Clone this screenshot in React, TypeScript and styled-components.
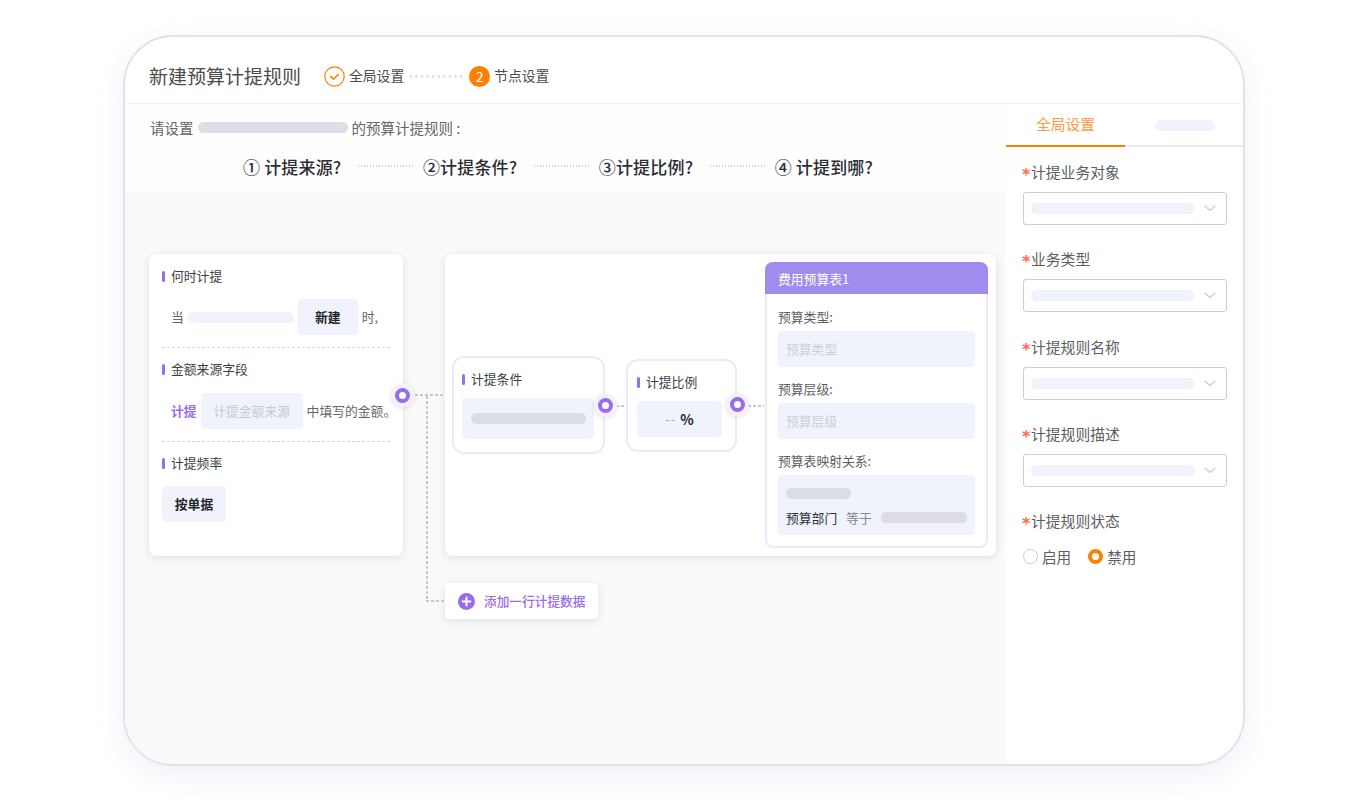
import React from 'react';
import styled, { createGlobalStyle, css } from 'styled-components';

const ORANGE = '#ff8000';
const PURPLE = '#9a6bec';
const FILL = '#f0f3fb';

const GlobalStyle = createGlobalStyle`
  html, body {
    margin: 0;
    background: #fff;
    font-family: "Noto Sans CJK SC", "Noto Sans", sans-serif;
  }
  body {
    min-height: 800px;
  }
`;

const dotsX = (color: string, pitch: number, dot: number, size: number) => css`
  background-image: linear-gradient(to right, ${color} 0 ${dot}px, transparent ${dot}px);
  background-size: ${pitch}px ${size}px;
  background-repeat: repeat-x;
`;

const CheckIcon = () => (
  <svg width="21" height="21" viewBox="0 0 21 21" fill="none">
    <circle cx="10.5" cy="10.5" r="9.7" stroke={ORANGE} strokeWidth="1.2" />
    <path d="M6.8 10.6l2.7 2.5 4.8-4.6" stroke={ORANGE} strokeWidth="1.6" strokeLinecap="round" strokeLinejoin="round" />
  </svg>
);

const Chevron = () => (
  <svg width="12" height="7" viewBox="0 0 12 7" fill="none">
    <path d="M1 1l5 4.5L11 1" stroke="#c8cbd5" strokeWidth="1.1" strokeLinecap="round" strokeLinejoin="round" />
  </svg>
);

const PlusIcon = () => (
  <svg width="17" height="17" viewBox="0 0 17 17">
    <circle cx="8.5" cy="8.5" r="8.5" fill={PURPLE} />
    <path d="M4.6 8.5h7.8M8.5 4.6v7.8" stroke="#fff" strokeWidth="2" strokeLinecap="round" />
  </svg>
);

const FIELDS = ['计提业务对象', '业务类型', '计提规则名称', '计提规则描述'];
const QUESTIONS = ['① 计提来源?', '②计提条件?', '③计提比例?', '④ 计提到哪?'];

export default function App() {
  return (
    <>
      <GlobalStyle />
      <Frame>
        <Header>
          <Title>新建预算计提规则</Title>
          <CheckIcon />
          <StepText>全局设置</StepText>
          <StepDots />
          <StepNumber>2</StepNumber>
          <StepText>节点设置</StepText>
        </Header>
        <Body>
          <Main>
            <Intro>
              <IntroLine>
                请设置
                <Pill $width={150} $color="#dcdfe7" />
                的预算计提规则 :
              </IntroLine>
              <Questions>
                {QUESTIONS.map((q, i) => (
                  <React.Fragment key={q}>
                    {i > 0 && <QuestionDots />}
                    <Question>{q}</Question>
                  </React.Fragment>
                ))}
              </Questions>
            </Intro>
            <Canvas>
              <SourceCard>
                <Section $first>
                  <Label>何时计提</Label>
                  <Row>
                    <span>当</span>
                    <Pill $width={106} $color={FILL} />
                    <ValueBox $width={60}>新建</ValueBox>
                    <span>时,</span>
                  </Row>
                </Section>
                <Section $gap={14}>
                  <Label>金额来源字段</Label>
                  <Row>
                    <Accent>计提</Accent>
                    <PlaceholderBox>计提金额来源</PlaceholderBox>
                    <span>中填写的金额。</span>
                  </Row>
                </Section>
                <Section $plain>
                  <Label>计提频率</Label>
                  <ValueBox $width={64}>按单据</ValueBox>
                </Section>
                <Port $top={141} $right={11} />
                <Branch />
                <Elbow />
              </SourceCard>
              <FlowCard>
                <Node $width={153} $height={98} $pad={8} $mr={21}>
                  <NodeLabel $top={11}>计提条件</NodeLabel>
                  <NodeBlock $width={132} $height={41}>
                    <Pill $width={115} $color="#dcdde2" />
                  </NodeBlock>
                  <Port $top={47.5} $right={14} />
                  <Link $length={10} />
                </Node>
                <Node $width={111} $height={93} $pad={9} $mr={28}>
                  <NodeLabel $top={11}>计提比例</NodeLabel>
                  <NodeBlock $width={85} $height={36}>
                    <Dash>--</Dash>
                    <Percent>%</Percent>
                  </NodeBlock>
                  <Port $top={44} $right={14} />
                  <Link $length={16} />
                </Node>
                <Table>
                  <TableHead>费用预算表1</TableHead>
                  <TableBody>
                    <TableLabel>预算类型:</TableLabel>
                    <TableField>预算类型</TableField>
                    <TableLabel>预算层级:</TableLabel>
                    <TableField>预算层级</TableField>
                    <TableLabel>预算表映射关系:</TableLabel>
                    <MapBlock>
                      <Pill $width={65} $color="#dcdde2" />
                      <MapRow>
                        <MapName>预算部门</MapName>
                        <MapOp>等于</MapOp>
                        <Pill $width={86} $color="#dcdde2" />
                      </MapRow>
                    </MapBlock>
                  </TableBody>
                </Table>
              </FlowCard>
              <AddButton>
                <PlusIcon />
                <AddText>添加一行计提数据</AddText>
              </AddButton>
            </Canvas>
          </Main>
          <Side>
            <Tabs>
              <ActiveTab>全局设置</ActiveTab>
              <IdleTab>
                <Pill $width={60} $color={FILL} />
              </IdleTab>
            </Tabs>
            <Form>
              {FIELDS.map((f) => (
                <div key={f}>
                  <FormLabel>
                    <Star>*</Star>
                    {f}
                  </FormLabel>
                  <Select>
                    <Pill $width={164} $color={FILL} />
                    <Chevron />
                  </Select>
                </div>
              ))}
              <div>
                <FormLabel>
                  <Star>*</Star>
                  计提规则状态
                </FormLabel>
                <Radios>
                  <RadioDot />
                  <RadioText>启用</RadioText>
                  <RadioDot $on />
                  <RadioText>禁用</RadioText>
                </Radios>
              </div>
            </Form>
          </Side>
        </Body>
      </Frame>
    </>
  );
}

const Frame = styled.div`
  box-sizing: border-box;
  width: 1122px;
  height: 731px;
  margin: 35px auto 0;
  display: flex;
  flex-direction: column;
  background: #fff;
  border: 2px solid #e1e3ec;
  border-radius: 50px;
  overflow: hidden;
  box-shadow: 0 8px 28px rgba(196, 202, 235, 0.28);
`;
const Header = styled.div`
  box-sizing: border-box;
  height: 67px;
  flex: none;
  display: flex;
  align-items: center;
  padding: 12px 0 0 24px;
  border-bottom: 1px solid #efeff1;
`;
const Title = styled.div`
  font-size: 19px;
  color: #4c4c4c;
  margin-right: 23px;
  padding-bottom: 2px;
`;
const StepText = styled.div`
  font-size: 13.8px;
  color: #4c4c4c;
  margin-left: 4px;
  padding-bottom: 2px;
`;
const StepDots = styled.div`
  width: 57px;
  height: 3px;
  margin: 0 4px;
  background-image: radial-gradient(circle, #dcdee6 1.1px, transparent 1.5px);
  background-size: 5.6px 3px;
  background-repeat: repeat-x;
`;
const StepNumber = styled.div`
  width: 21px;
  height: 21px;
  border-radius: 50%;
  background: ${ORANGE};
  color: #fff;
  font-size: 14px;
  line-height: 21px;
  text-align: center;
`;
const Body = styled.div`
  flex: 1;
  display: flex;
  min-height: 0;
`;
const Main = styled.div`
  flex: none;
  width: 881px;
  display: flex;
  flex-direction: column;
`;
const Intro = styled.div`
  box-sizing: border-box;
  height: 88px;
  padding: 13px 0 0 25px;
  background: #fefefe;
`;
const IntroLine = styled.div`
  display: flex;
  align-items: center;
  gap: 4px;
  height: 20px;
  font-size: 14.5px;
  color: #666;
`;
const Pill = styled.div<{ $width: number; $color: string }>`
  flex: none;
  width: ${({ $width }) => $width}px;
  height: 11px;
  border-radius: 6px;
  background: ${({ $color }) => $color};
`;
const Questions = styled.div`
  display: flex;
  align-items: center;
  height: 20px;
  margin: 19px 0 0 93px;
`;
const Question = styled.div`
  font-size: 17px;
  letter-spacing: 0.17px;
  font-weight: 500;
  color: #2a2d33;
  white-space: nowrap;
`;
const QuestionDots = styled.div`
  width: 57px;
  height: 2px;
  margin: 0 8px 0 16.5px;
  ${dotsX('#cdd0da', 3, 1.5, 2)}
`;
const Canvas = styled.div`
  flex: 1;
  display: grid;
  grid-template-columns: 254px 551px;
  grid-template-rows: 302px auto;
  column-gap: 42px;
  row-gap: 27px;
  align-content: start;
  padding: 62px 0 0 24px;
  background: #fafafa;
`;
const Card = styled.div`
  box-sizing: border-box;
  position: relative;
  background: #fff;
  border-radius: 8px;
  box-shadow: 0 2px 8px rgba(60, 64, 90, 0.14);
`;
const SourceCard = styled(Card)`
  padding: 0 13px;
  z-index: 1;
`;
const FlowCard = styled(Card)`
  display: flex;
  align-items: center;
  padding-left: 7px;
`;
const Section = styled.div<{ $first?: boolean; $plain?: boolean; $gap?: number }>`
  display: flex;
  flex-direction: column;
  align-items: flex-start;
  gap: ${({ $gap }) => $gap ?? 13}px;
  padding: ${({ $first }) => ($first ? 14 : 13)}px 0 ${({ $plain }) => ($plain ? 0 : 12)}px;
  ${({ $plain }) => !$plain && 'border-bottom: 1px dashed #d6d8df;'}
`;
const Label = styled.div`
  position: relative;
  height: 18px;
  padding-left: 9px;
  font-size: 12.8px;
  line-height: 16px;
  color: #3d3f45;
  white-space: nowrap;

  &::before {
    content: '';
    position: absolute;
    left: 0;
    top: 3px;
    width: 3px;
    height: 11px;
    border-radius: 2px;
    background: ${PURPLE};
  }
`;
const Row = styled.div`
  display: flex;
  align-items: center;
  gap: 4px;
  padding-left: 9px;
  font-size: 12.8px;
  color: #666;
  white-space: nowrap;

  > span {
    margin-bottom: 2px;
  }
`;
const Box = styled.div`
  box-sizing: border-box;
  height: 36px;
  flex: none;
  border-radius: 4px;
  background: ${FILL};
  font-size: 12.8px;
  line-height: 35px;
  text-align: center;
`;
const ValueBox = styled(Box)<{ $width: number }>`
  width: ${({ $width }) => $width}px;
  font-weight: 700;
  color: #24262b;
`;
const PlaceholderBox = styled(Box)`
  width: 102px;
  color: #c8cad2;
`;
const Accent = styled.span`
  font-weight: 700;
  color: ${PURPLE};
`;
const Port = styled.div<{ $top: number; $right: number }>`
  position: absolute;
  z-index: 2;
  right: -${({ $right }) => $right}px;
  top: ${({ $top }) => $top - 11.5}px;
  width: 23px;
  height: 23px;
  border-radius: 50%;
  background: #f3f2fb;
  box-shadow: 0 1px 4px rgba(60, 64, 90, 0.14);

  &::after {
    content: '';
    position: absolute;
    left: 4px;
    top: 4px;
    width: 15px;
    height: 15px;
    box-sizing: border-box;
    border: 4px solid ${PURPLE};
    border-radius: 50%;
    background: #fff;
  }
`;
const Branch = styled.div`
  position: absolute;
  left: calc(100% + 12px);
  top: 140px;
  width: 30px;
  height: 2px;
  ${dotsX('#c5c8d2', 5, 3, 2)}
`;
const Elbow = styled.div`
  position: absolute;
  left: calc(100% + 23px);
  top: 142px;
  width: 19px;
  height: 206px;
  background-image:
    linear-gradient(to bottom, #c5c8d2 0 3px, transparent 3px),
    linear-gradient(to right, #c5c8d2 0 3px, transparent 3px);
  background-size: 2px 5px, 5px 2px;
  background-position: left top, left bottom;
  background-repeat: repeat-y, repeat-x;
`;
const Link = styled.div<{ $length: number }>`
  position: absolute;
  left: calc(100% + 13px);
  top: 50%;
  width: ${({ $length }) => $length}px;
  height: 2px;
  ${dotsX('#c5c8d2', 5, 3, 2)}
`;
const Node = styled.div<{ $width: number; $height: number; $pad: number; $mr: number }>`
  box-sizing: border-box;
  position: relative;
  flex: none;
  width: ${({ $width }) => $width}px;
  height: ${({ $height }) => $height}px;
  margin-right: ${({ $mr }) => $mr}px;
  padding: 0 ${({ $pad }) => $pad}px;
  border: 2px solid #ece9fd;
  border-radius: 12px;
  background: #fff;
`;
const NodeLabel = styled(Label)<{ $top: number }>`
  margin: ${({ $top }) => $top + 2}px 0 ${({ $top }) => 20 - $top}px;
`;
const NodeBlock = styled.div<{ $width: number; $height: number }>`
  width: ${({ $width }) => $width}px;
  height: ${({ $height }) => $height}px;
  display: flex;
  align-items: center;
  justify-content: center;
  gap: 4px;
  border-radius: 4px;
  background: ${FILL};
`;
const Dash = styled.span`
  font-size: 13px;
  letter-spacing: 1px;
  color: #a9abb3;
`;
const Percent = styled.span`
  font-size: 14px;
  font-weight: 700;
  color: #24262b;
`;
const Table = styled.div`
  box-sizing: border-box;
  width: 223px;
  height: 286px;
  flex: none;
  border: 2px solid #ece9fd;
  border-radius: 8px;
`;
const TableHead = styled.div`
  height: 32px;
  margin: -2px -2px 0;
  padding-left: 13px;
  border-radius: 8px 8px 0 0;
  background: #a18bee;
  color: #fff;
  font-size: 12.8px;
  line-height: 33px;
`;
const TableBody = styled.div`
  padding: 14px 11px 0;
`;
const TableLabel = styled.div`
  height: 18px;
  margin-bottom: 5px;
  font-size: 12.8px;
  line-height: 18px;
  color: #5c5e64;
`;
const TableField = styled.div`
  height: 36px;
  margin-bottom: 13px;
  padding-left: 8px;
  border-radius: 4px;
  background: ${FILL};
  font-size: 12.8px;
  line-height: 36px;
  color: #ccced6;
`;
const MapBlock = styled.div`
  box-sizing: border-box;
  height: 60px;
  padding: 13px 8px 0;
  border-radius: 4px;
  background: ${FILL};
`;
const MapRow = styled.div`
  display: flex;
  align-items: center;
  height: 18px;
  margin-top: 9px;
  font-size: 12.8px;
  white-space: nowrap;
`;
const MapName = styled.span`
  color: #2e3036;
  margin-right: 9px;
`;
const MapOp = styled.span`
  color: #85878e;
  margin-right: 9px;
`;
const AddButton = styled(Card)`
  grid-column: 2;
  justify-self: start;
  width: 153px;
  height: 36px;
  display: flex;
  align-items: center;
  gap: 9px;
  padding-left: 13px;
  border-radius: 4px;
`;
const AddText = styled.span`
  margin-bottom: 2px;
  font-size: 12.7px;
  font-weight: 500;
  color: ${PURPLE};
  white-space: nowrap;
`;
const Side = styled.div`
  flex: 1;
  min-width: 0;
  background: #fff;
`;
const Tabs = styled.div`
  box-sizing: border-box;
  height: 43px;
  display: flex;
  border-bottom: 2px solid #e7e8ef;
`;
const ActiveTab = styled.div`
  width: 119px;
  height: 43px;
  box-sizing: border-box;
  padding-top: 9px;
  border-bottom: 2px solid ${ORANGE};
  font-size: 14.8px;
  line-height: 22px;
  text-align: center;
  color: #ff9a3d;
`;
const IdleTab = styled.div`
  padding: 16px 0 0 30px;
`;
const Form = styled.div`
  display: flex;
  flex-direction: column;
  gap: 25.25px;
  padding: 16px 16px 0 17px;
`;
const FormLabel = styled.div`
  height: 20px;
  margin-bottom: 9px;
  font-size: 14.8px;
  line-height: 18px;
  color: #5b5d63;
  white-space: nowrap;
`;
const Star = styled.span`
  display: inline-block;
  width: 8px;
  margin-left: -1px;
  margin-right: 1px;
  font-family: "DejaVu Sans", sans-serif;
  font-size: 16px;
  font-weight: 700;
  color: #ff6a4a;
  transform: translateY(2px);
`;
const Select = styled.div`
  box-sizing: border-box;
  width: 204px;
  height: 33px;
  display: flex;
  align-items: center;
  justify-content: space-between;
  padding: 0 10px 0 7px;
  border: 1px solid #cbced8;
  border-radius: 3px;
`;
const Radios = styled.div`
  display: flex;
  align-items: center;
  height: 18px;
  margin-top: 15px;
`;
const RadioDot = styled.span<{ $on?: boolean }>`
  box-sizing: border-box;
  width: 15px;
  height: 15px;
  border-radius: 50%;
  background: #fff;
  border: ${({ $on }) => ($on ? `4px solid ${ORANGE}` : '1px solid #c9ccd6')};
`;
const RadioText = styled.span`
  margin: 0 17px 0 4px;
  font-size: 14.6px;
  color: #5b5d63;
`;
